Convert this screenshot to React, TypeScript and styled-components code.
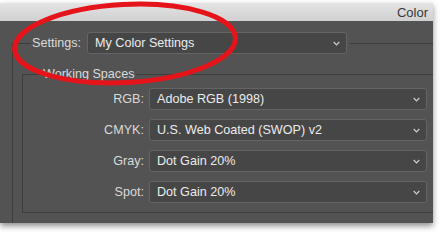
import React from 'react';
import styled, { createGlobalStyle } from 'styled-components';

const Global = createGlobalStyle`
    html, body {
        margin: 0;
        background: #fff;
    }
    body {
        font-family: "Liberation Sans", Arial, sans-serif;
        -webkit-font-smoothing: antialiased;
    }
`;

const Stage = styled.div`
    position: relative;
    width: 441px;
    height: 233px;
    padding-top: 3px;
    box-sizing: border-box;
    overflow: hidden;
`;

const Window = styled.div`
    width: 433px;
    box-shadow: 0 3px 6px rgba(0, 0, 0, 0.45);
`;

const TitleBar = styled.div`
    height: 18px;
    display: flex;
    align-items: center;
    justify-content: flex-end;
    padding-right: 5px;
    background: linear-gradient(#e4e4e4, #d0d0d0);
    color: #383838;
    font-size: 13px;
`;

const Body = styled.div`
    height: 202px;
    box-sizing: border-box;
    padding-top: 11px;
    display: flex;
    flex-direction: column;
    background: #535353;
    overflow: hidden;
`;

const Group = styled.fieldset<{ $inner?: boolean }>`
    margin: ${p => (p.$inner ? '13px 0 11px 0' : '0 0 0 12px')};
    padding: ${p => (p.$inner ? '0 0 9px 18px' : '0 0 0 9px')};
    flex: ${p => (p.$inner ? 'none' : '1')};
    min-width: 0;
    border: none;
    border-top: 1px solid #3d3d3d;
    border-left: 1px solid #3d3d3d;
    border-bottom: ${p => (p.$inner ? '1px solid #3d3d3d' : 'none')};
`;

const Legend = styled.legend<{ $offset?: number }>`
    margin-left: ${p => p.$offset ?? 0}px;
    padding: 0 3px 0 1px;
    display: flex;
    align-items: center;
    color: #dadada;
    font-size: 12.6px;
`;

const Heading = styled.legend`
    padding: 0 2px;
    color: #dadada;
    font-size: 12.6px;
    line-height: 15px;
`;

const SettingsLabel = styled.span`
    margin-right: 6px;
`;

const Rows = styled.div`
    margin-top: 6px;
    display: grid;
    grid-template-columns: 103px 278px;
    column-gap: 5px;
    row-gap: 9px;
    align-items: center;
`;

const Label = styled.span`
    text-align: right;
    color: #dadada;
    font-size: 12.6px;
`;

const Select = styled.div<{ $width?: number }>`
    width: ${p => (p.$width ? `${p.$width}px` : 'auto')};
    height: 22px;
    box-sizing: border-box;
    display: flex;
    align-items: center;
    justify-content: space-between;
    padding: 0 6px 0 7px;
    border: 1px solid #646464;
    border-radius: 3px;
    background: #464646;
    color: #ececec;
    font-size: 12.6px;
    white-space: nowrap;
`;

const Chevron = () => (
    <svg width="7" height="5" viewBox="0 0 7 5">
        <path d="M0.7 1 L3.5 3.8 L6.3 1" fill="none" stroke="#cfcfcf" strokeWidth="1.2" />
    </svg>
);

const Highlight = styled.svg`
    position: absolute;
    left: 0;
    top: 0;
    pointer-events: none;
`;

const spaces = [
    { name: 'RGB:', value: 'Adobe RGB (1998)' },
    { name: 'CMYK:', value: 'U.S. Web Coated (SWOP) v2' },
    { name: 'Gray:', value: 'Dot Gain 20%' },
    { name: 'Spot:', value: 'Dot Gain 20%' },
];

const App = () => (
    <Stage>
        <Global />
        <Window>
            <TitleBar>Color</TitleBar>
            <Body>
                <Group>
                    <Legend $offset={9}>
                        <SettingsLabel>Settings:</SettingsLabel>
                        <Select $width={260}>
                            My Color Settings
                            <Chevron />
                        </Select>
                    </Legend>
                    <Group $inner>
                        <Heading>Working Spaces</Heading>
                        <Rows>
                            {spaces.map(s => (
                                <React.Fragment key={s.name}>
                                    <Label>{s.name}</Label>
                                    <Select>
                                        {s.value}
                                        <Chevron />
                                    </Select>
                                </React.Fragment>
                            ))}
                        </Rows>
                    </Group>
                </Group>
            </Body>
        </Window>
        <Highlight width="441" height="233">
            <ellipse cx="125" cy="43.5" rx="110.5" ry="39" fill="none" stroke="#e5141a" strokeWidth="5" transform="rotate(-3 125 43.5)" />
        </Highlight>
    </Stage>
);

export default App;
